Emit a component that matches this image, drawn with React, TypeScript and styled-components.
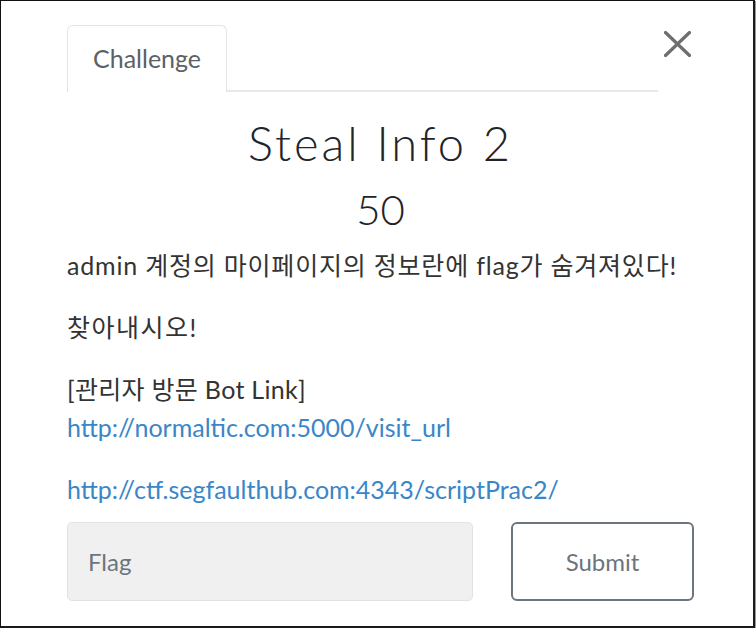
import React from "react";
import styled, { createGlobalStyle } from "styled-components";

const GlobalStyle = createGlobalStyle`
  html, body { margin: 0; padding: 0; background: #ffffff; }
  body { font-family: Lato, "Noto Sans CJK KR", sans-serif; }
  * { box-sizing: border-box; }
`;

const Frame = styled.div`
  width: 755px;
  height: 628px;
  border-top: 1px solid #111;
  border-left: 1px solid #111;
  border-right: 2px solid #1a1a1a;
  border-bottom: 2px solid #1a1a1a;
  box-shadow: 1px 1px 0 #9a9a9a;
  padding: 24px 59px 0 66px;
  display: flex;
  flex-direction: column;
  background: #fff;
`;

const Header = styled.div`
  display: flex;
  align-items: flex-start;
`;

const Nav = styled.div`
  flex: 1;
  display: flex;
  border-bottom: 2px solid #e6e8eb;
  height: 67px;
`;

const Tab = styled.div`
  height: 67px;
  padding: 0 25px 2px;
  border: 1.5px solid #e1e4e8;
  border-bottom: none;
  border-radius: 6px 6px 0 0;
  background: #fff;
  display: flex;
  align-items: center;
  font-size: 25px;
  color: #5b6167;
  margin-bottom: -2px;
`;

const CloseButton = styled.button`
  width: 36px;
  height: 34px;
  margin-top: 2px;
  padding: 0 0 0 6px;
  border: none;
  background: transparent;
  display: flex;
  align-items: center;
  justify-content: flex-start;
  cursor: pointer;
`;

const Title = styled.h3`
  margin: 25px 0 0;
  text-align: center;
  font-size: 47px;
  font-weight: 300;
  line-height: 53px;
  letter-spacing: 3px;
  color: #212529;
`;

const Points = styled.h4`
  margin: 17px 0 0;
  text-align: center;
  font-size: 42px;
  font-weight: 300;
  line-height: 44px;
  color: #212529;
`;

const Description = styled.div`
  margin-top: 15px;
  font-size: 25px;
  line-height: 38px;
  color: #333;
  font-family: Lato, "Noto Sans CJK KR", sans-serif;
`;

const Paragraph = styled.p<{ $tracking?: number }>`
  margin: 0 0 24px;
  letter-spacing: ${(p) => p.$tracking ?? 0}px;
  white-space: nowrap;
  &:last-child { margin-bottom: 0; }
`;

const Link = styled.a`
  color: #3a86c8;
  text-decoration: none;
  letter-spacing: 0;
`;

const SubmitRow = styled.div`
  margin-top: 14px;
  display: grid;
  grid-template-columns: 1fr 183px;
  gap: 38px;
`;

const FlagInput = styled.input`
  height: 79px;
  width: 100%;
  border: 1.5px solid #dfe3e7;
  border-radius: 5px;
  background: #f0f0f0;
  padding: 0 20px;
  font-family: Lato, sans-serif;
  font-size: 24px;
  color: #495057;
  outline: none;
  &::placeholder { color: #6c757d; }
`;

const SubmitButton = styled.button`
  height: 79px;
  border: 2px solid #6c757d;
  border-radius: 6px;
  background: #fff;
  font-family: Lato, sans-serif;
  font-size: 24px;
  color: #6c757d;
  cursor: pointer;
`;

export default function App() {
  return (
    <>
      <GlobalStyle />
      <Frame>
        <Header>
          <Nav>
            <Tab>Challenge</Tab>
          </Nav>
          <CloseButton aria-label="Close">
            <svg width="27" height="26" viewBox="0 0 27 26">
              <path d="M1.5 1.5 L25.5 24.5 M25.5 1.5 L1.5 24.5" stroke="#6e6e6e" strokeWidth="3.2" strokeLinecap="round" />
            </svg>
          </CloseButton>
        </Header>
        <Title>Steal Info 2</Title>
        <Points>50</Points>
        <Description>
          <Paragraph $tracking={0.8}>admin 계정의 마이페이지의 정보란에 flag가 숨겨져있다!</Paragraph>
          <Paragraph $tracking={1.5}>찾아내시오!</Paragraph>
          <Paragraph $tracking={0.3}>
            [관리자 방문 Bot Link]
            <br />
            <Link href="#">http://normaltic.com:5000/visit_url</Link>
          </Paragraph>
          <Paragraph>
            <Link href="#">http://ctf.segfaulthub.com:4343/scriptPrac2/</Link>
          </Paragraph>
        </Description>
        <SubmitRow>
          <FlagInput placeholder="Flag" />
          <SubmitButton>Submit</SubmitButton>
        </SubmitRow>
      </Frame>
    </>
  );
}
